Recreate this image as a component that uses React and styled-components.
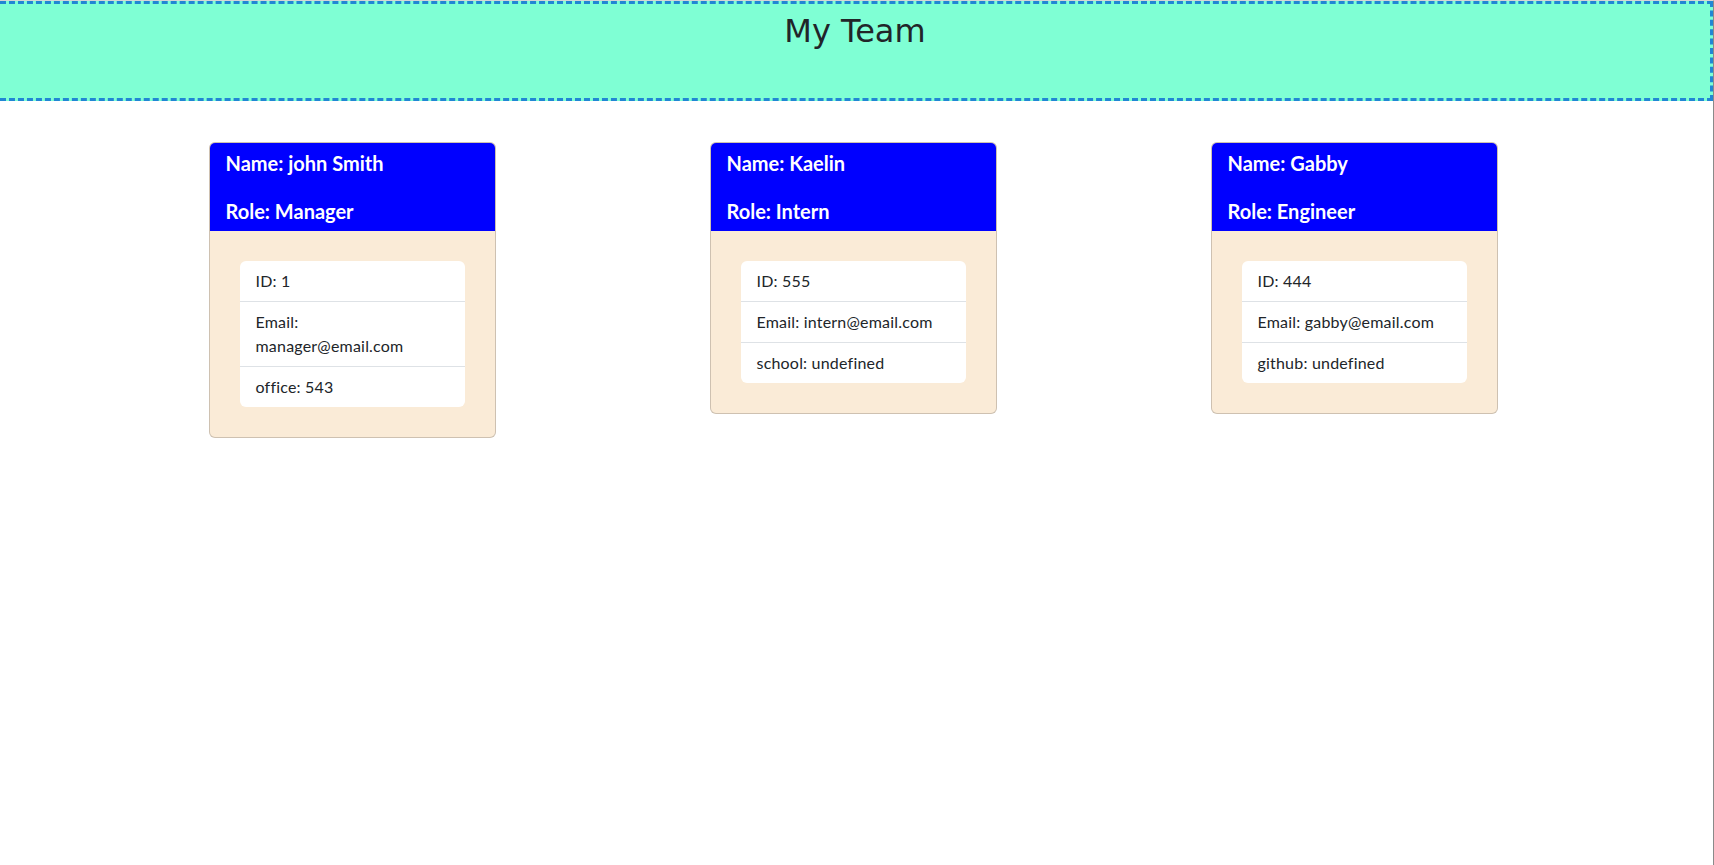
import React from 'react';
import styled, { createGlobalStyle } from 'styled-components';

const GlobalStyle = createGlobalStyle`
  * {
    box-sizing: border-box;
  }

  body {
    margin: 0;
    background: #fff;
    color: #212529;
    font-family: Lato, "Noto Sans", sans-serif;
    font-size: 16px;
    line-height: 1.5;
  }
`;

const Page = styled.div`
  min-height: 100vh;
  border-top: 1px solid #d6d6d6;
  border-right: 1px solid #8a8a8a;
`;

const Header = styled.header`
  height: 100px;
  background: aquamarine;
  border: 3px dashed #2186d4;
  border-left: none;
  text-align: center;
`;

const Title = styled.h1`
  margin: 0;
  padding-top: 5px;
  font-family: "Comic Sans MS", "DejaVu Sans", sans-serif;
  font-size: 32px;
  font-weight: 400;
  line-height: 1.4;
  color: #212529;
`;

const Row = styled.main`
  display: grid;
  grid-template-columns: repeat(3, 501px);
  justify-items: center;
  align-items: start;
  width: 1503px;
  margin: 41px 0 0 calc(50% - 755px);
`;

const Card = styled.section`
  width: 287px;
  border: 1px solid rgba(0, 0, 0, 0.175);
  border-radius: 6px;
  overflow: hidden;
  background: antiquewhite;
`;

const CardHeader = styled.div`
  display: flex;
  flex-direction: column;
  gap: 24px;
  padding: 8px 16px;
  background: #0000ff;
  color: #fff;
`;

const HeaderLine = styled.h5`
  margin: 0;
  font-size: 20px;
  font-weight: 700;
  line-height: 1.2;
`;

const CardBody = styled.div`
  padding: 30px;
`;

const List = styled.ul`
  margin: 0;
  padding: 0;
  list-style: none;
  background: #fff;
  border-radius: 6px;
`;

const Item = styled.li`
  padding: 8px 16px;
  border-top: 1px solid #dee2e6;
  letter-spacing: 0.2px;

  &:first-child {
    border-top: none;
  }
`;

const team = [
  { name: 'john Smith', role: 'Manager', id: 1, email: 'manager@email.com', extra: 'office: 543' },
  { name: 'Kaelin', role: 'Intern', id: 555, email: 'intern@email.com', extra: 'school: undefined' },
  { name: 'Gabby', role: 'Engineer', id: 444, email: 'gabby@email.com', extra: 'github: undefined' },
];

const App = () => (
  <Page>
    <GlobalStyle />
    <Header>
      <Title>My Team</Title>
    </Header>
    <Row>
      {team.map(member => (
        <Card key={member.id}>
          <CardHeader>
            <HeaderLine>Name: {member.name}</HeaderLine>
            <HeaderLine>Role: {member.role}</HeaderLine>
          </CardHeader>
          <CardBody>
            <List>
              <Item>ID: {member.id}</Item>
              <Item>Email: {member.email}</Item>
              <Item>{member.extra}</Item>
            </List>
          </CardBody>
        </Card>
      ))}
    </Row>
  </Page>
);

export default App;
